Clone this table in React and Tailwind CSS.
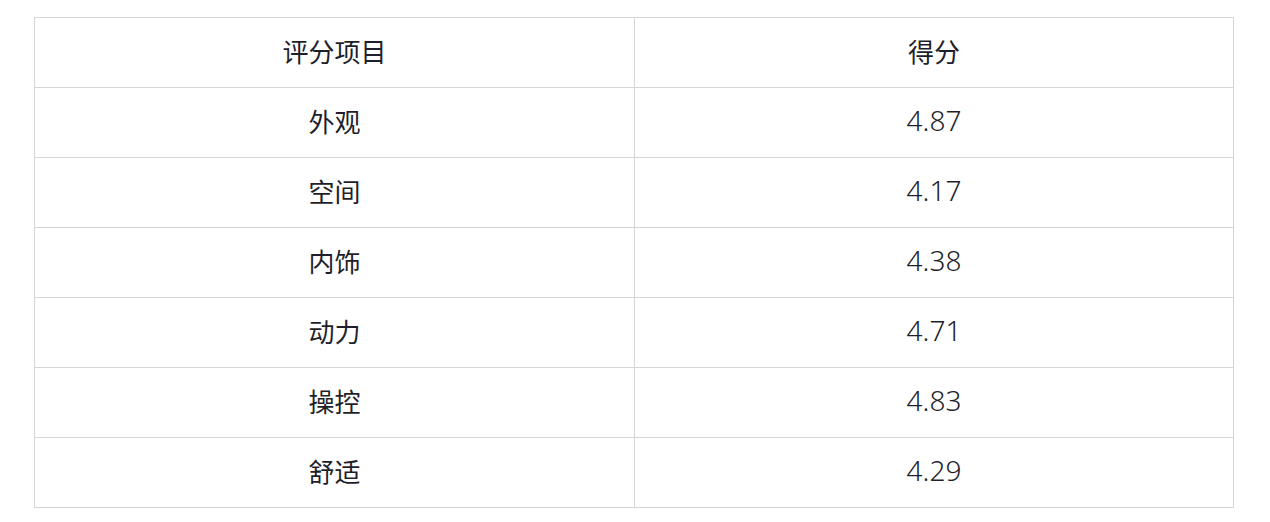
const rows = [
  ["外观", "4.87"],
  ["空间", "4.17"],
  ["内饰", "4.38"],
  ["动力", "4.71"],
  ["操控", "4.83"],
  ["舒适", "4.29"],
];

export default function App() {
  return (
    <div className="w-[1270px] h-[522px] bg-white pt-[17px] pl-[34px] font-['Noto_Sans','Noto_Sans_CJK_SC',sans-serif] text-[#1f1f2b]">
      <table className="w-[1199px] border-collapse table-fixed">
        <colgroup>
          <col className="w-[600px]" />
          <col className="w-[599px]" />
        </colgroup>
        <tbody>
          <tr className="h-[70px]">
            <td className="border border-[#d6d6d6] text-center text-[26px]">评分项目</td>
            <td className="border border-[#d6d6d6] text-center text-[26px]">得分</td>
          </tr>
          {rows.map(([name, score]) => (
            <tr key={name} className="h-[70px]">
              <td className="border border-[#d6d6d6] text-center text-[26px]">{name}</td>
              <td className="border border-[#d6d6d6] text-center text-[28px] font-light pb-[5px]">{score}</td>
            </tr>
          ))}
        </tbody>
      </table>
    </div>
  );
}
